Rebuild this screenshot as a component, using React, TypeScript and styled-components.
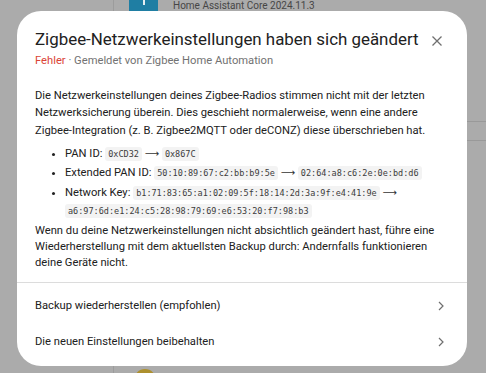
import styled, { createGlobalStyle } from 'styled-components'


const GlobalStyle = createGlobalStyle`
  html, body {
    margin: 0;
    padding: 0;
    height: 100%;
  }
  body {
    font-family: Roboto, "Liberation Sans", sans-serif;
    overflow: hidden;
  }
`

const Page = styled.div`
  position: relative;
  display: flex;
  height: 373px;
  background: #ababab;
  overflow: hidden;
`

const Sidebar = styled.div`
  width: 113px;
  flex-shrink: 0;
  border-right: 1px solid #9c9c9c;
`

const Main = styled.div`
  flex: 1;
  display: flex;
  flex-direction: column;
  justify-content: space-between;
`

const UpdateRow = styled.div`
  height: 11px;
  display: flex;
  align-items: flex-end;
  gap: 15px;
  padding-left: 15px;
  overflow: hidden;
`

const AppIcon = styled.div`
  width: 29px;
  height: 29px;
  flex-shrink: 0;
  background: #1f7ea3;
  display: flex;
  align-items: center;
  justify-content: center;
`

const UpdateTitle = styled.span`
  font-size: 10px;
  line-height: 11px;
  color: #464646;
  white-space: nowrap;
`

const Rows = styled.div`
  margin-top: 110px;
  border-top: 1px solid #999;
  height: 18px;
  border-bottom: 1px solid #999;
`

const AvatarRow = styled.div`
  height: 4px;
  padding-left: 20px;
  overflow: hidden;
`

const Avatar = styled.div`
  width: 22px;
  height: 22px;
  border-radius: 50%;
  background: #ad902f;
`

const Dialog = styled.div`
  position: absolute;
  left: 17px;
  top: 11px;
  width: 450px;
  background: #fff;
  border-radius: 24px;
  color: #212121;
  display: flex;
  flex-direction: column;
  overflow: hidden;
`

const Header = styled.div`
  display: flex;
  align-items: flex-start;
  padding: 17px 18px 0 18px;
`

const HeaderText = styled.div`
  flex: 1;
`

const Title = styled.h2`
  margin: 0;
  font-size: 16.9px;
  line-height: 22px;
  font-weight: 400;
  color: #212121;
  white-space: nowrap;
`

const Subtitle = styled.div`
  font-size: 11.2px;
  line-height: 16px;
  color: #727272;
  margin-top: 3px;
`

const Severity = styled.span`
  color: #db4437;
`

const CloseButton = styled.button`
  width: 24px;
  height: 24px;
  margin-top: 1px;
  padding: 0;
  border: none;
  background: none;
  display: flex;
  align-items: center;
  justify-content: center;
  color: #6f6f6f;
  cursor: pointer;
`

const Body = styled.div`
  padding: 18px 18px 11px 18px;
  font-size: 11.2px;
`

const Paragraph = styled.p<{ $lh: number }>`
  margin: 0;
  line-height: ${p => p.$lh}px;
`

const Changes = styled.ul`
  margin: 6px 0 3px 0;
  padding-left: 30px;
  line-height: 17px;
`

const Change = styled.li`
  margin-bottom: 1.5px;
  &:last-child {
    margin-bottom: 0;
  }
`

const Code = styled.code`
  font-family: "DejaVu Sans Mono", "Liberation Mono", monospace;
  font-size: 8.5px;
  color: #3c3c3c;
  background: #f3f3f3;
  border-radius: 3px;
  padding: 2px 3px;
`

const Arrow = styled.span`
  font-family: "DejaVu Sans", sans-serif;
  font-size: 10px;
  color: #333;
`

const Divider = styled.div`
  height: 1px;
  flex-shrink: 0;
  background: #dcdcdc;
`

const Actions = styled.div`
  padding: 5px 0 6px 0;
`

const Action = styled.div`
  height: 36px;
  display: flex;
  align-items: center;
  justify-content: space-between;
  padding: 0 23px 0 18px;
  font-size: 11.2px;
  color: #212121;
  cursor: pointer;
`


interface IChange {
  label: string
  from: string
  to: string
}

const changes: IChange[] = [
  { label: 'PAN ID', from: '0xCD32', to: '0x867C' },
  { label: 'Extended PAN ID', from: '50:10:89:67:c2:bb:b9:5e', to: '02:64:a8:c6:2e:0e:bd:d6' },
  {
    label: 'Network Key',
    from: 'b1:71:83:65:a1:02:09:5f:18:14:2d:3a:9f:e4:41:9e',
    to: 'a6:97:6d:e1:24:c5:28:98:79:69:e6:53:20:f7:98:b3',
  },
]

const actions = [
  'Backup wiederherstellen (empfohlen)',
  'Die neuen Einstellungen beibehalten',
]


const Chevron = () => (
  <svg width="6" height="10" viewBox="0 0 6 10">
    <path d="M1 1 L5 5 L1 9" fill="none" stroke="#6f6f6f" strokeWidth="1.2" />
  </svg>
)


const App = () => (
  <>
    <GlobalStyle />
    <Page>
      <Sidebar />
      <Main>
        <div>
          <UpdateRow>
            <AppIcon>
              <svg width="20" height="20" viewBox="0 0 20 20">
                <path d="M10 18 V9 M10 12 L5 7 M10 11 L15 6" stroke="#e6eef2" strokeWidth="2" fill="none" />
                <circle cx="5" cy="6" r="2" fill="#e6eef2" />
                <circle cx="15" cy="5" r="2" fill="#e6eef2" />
              </svg>
            </AppIcon>
            <UpdateTitle>Home Assistant Core 2024.11.3</UpdateTitle>
          </UpdateRow>
          <Rows />
        </div>
        <AvatarRow>
          <Avatar />
        </AvatarRow>
      </Main>

      <Dialog>
        <Header>
          <HeaderText>
            <Title>Zigbee-Netzwerkeinstellungen haben sich geändert</Title>
            <Subtitle>
              <Severity>Fehler</Severity> · Gemeldet von Zigbee Home Automation
            </Subtitle>
          </HeaderText>
          <CloseButton aria-label="Schließen">
            <svg width="10" height="10" viewBox="0 0 10 10">
              <path d="M0.5 0.5 L9.5 9.5 M9.5 0.5 L0.5 9.5" stroke="currentColor" strokeWidth="1.3" />
            </svg>
          </CloseButton>
        </Header>

        <Body>
          <Paragraph $lh={17.3}>
            Die Netzwerkeinstellungen deines Zigbee-Radios stimmen nicht mit der letzten
            Netzwerksicherung überein. Dies geschieht normalerweise, wenn eine andere
            Zigbee-Integration (z. B. Zigbee2MQTT oder deCONZ) diese überschrieben hat.
          </Paragraph>
          <Changes>
            {changes.map(({ label, from, to }) => (
              <Change key={label}>
                {label}: <Code>{from}</Code> <Arrow>⟶</Arrow> <Code>{to}</Code>
              </Change>
            ))}
          </Changes>
          <Paragraph $lh={16}>
            Wenn du deine Netzwerkeinstellungen nicht absichtlich geändert hast, führe eine
            Wiederherstellung mit dem aktuellsten Backup durch: Andernfalls funktionieren
            deine Geräte nicht.
          </Paragraph>
        </Body>

        <Divider />

        <Actions>
          {actions.map(label => (
            <Action key={label}>
              {label}
              <Chevron />
            </Action>
          ))}
        </Actions>
      </Dialog>
    </Page>
  </>
)


export default App
